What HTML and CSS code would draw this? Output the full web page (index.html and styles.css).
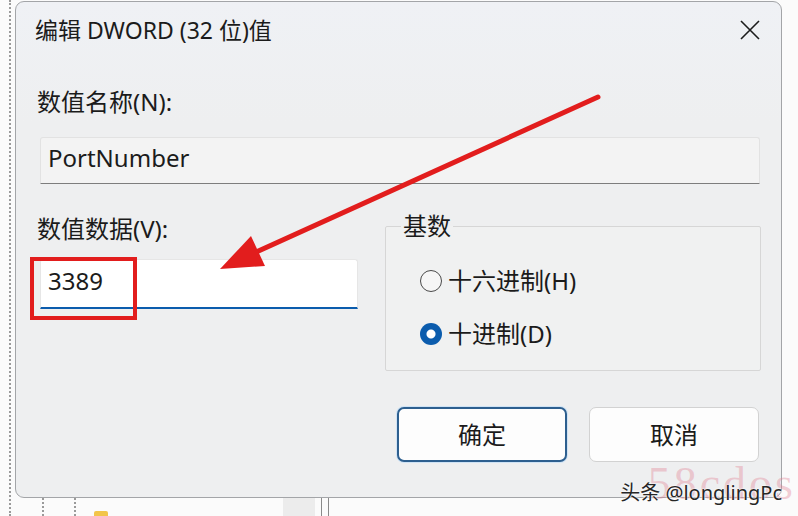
FILE: index.html
```html
<!DOCTYPE html>
<html lang="zh-CN">
<head>
  <meta charset="UTF-8" />
  <title>编辑 DWORD (32 位)值</title>
  <link rel="stylesheet" href="styles.css">
</head>
<body>
  <div class="page">
    <div class="guide"></div>
    <div class="main">
      <section class="dialog">
        <div class="title-bar">
          <h1 class="title">编辑 DWORD (32 位)值</h1>
          <span class="close">
            <svg width="22" height="22" viewBox="0 0 22 22"><path d="M2 2 L20 20 M20 2 L2 20" stroke="#1c1c1c" stroke-width="1.6" fill="none"/></svg>
          </span>
        </div>

        <div class="label name-label">数值名称(N):</div>
        <div class="field name-field">PortNumber</div>

        <div class="data-row">
          <div class="data-col">
            <div class="label data-label">数值数据(V):</div>
            <div class="field value-field">3389</div>
          </div>

          <fieldset class="base-box">
            <legend>基数</legend>
            <div class="radio-row">
              <span class="radio"></span>
              <span>十六进制(H)</span>
            </div>
            <div class="radio-row">
              <span class="radio checked"></span>
              <span>十进制(D)</span>
            </div>
          </fieldset>
        </div>

        <div class="buttons">
          <button class="btn primary">确定</button>
          <button class="btn">取消</button>
        </div>
      </section>

      <div class="below">
        <span class="dots d1"></span>
        <span class="dots d2"></span>
        <span class="folder"></span>
        <span class="grey-block"></span>
        <span class="vline"></span>
        <span class="vline"></span>
      </div>
    </div>
  </div>

  <!-- annotation drawn on top of the screenshot -->
  <svg class="markup" width="798" height="516" viewBox="0 0 798 516">
    <rect x="32" y="259" width="103" height="59" fill="none" stroke="#e21d1d" stroke-width="4"/>
    <line x1="598" y1="97" x2="252" y2="254" stroke="#e21d1d" stroke-width="5" stroke-linecap="round"/>
    <polygon points="220,269 265,266 251,236" fill="#e21d1d"/>
  </svg>

  <div class="watermark">
    <span class="wm-bg">58cdos</span>
    <span class="wm-text">头条 @longlingPc</span>
  </div>
</body>
</html>
```

FILE: styles.css
```css
:root {
  --dialog-bg: #eeeff0;
  --border: #a3a5a8;
  --text: #1b1b1b;
  --accent: #0b5cad;
}

* {
  box-sizing: border-box;
  margin: 0;
  padding: 0;
}

body {
  width: 798px;
  height: 516px;
  overflow: hidden;
  background: #fbfbfb;
  color: var(--text);
  font-family: "Noto Sans", "Noto Sans CJK SC", sans-serif;
  position: relative;
}

.page {
  display: flex;
  height: 516px;
}

.guide {
  width: 11px;
  border-right: 2px dotted #9a9a9a;
}

.main {
  padding-top: 1px;
  margin-left: 4px;
}

.dialog {
  width: 767px;
  height: 497px;
  background: linear-gradient(#eff1f5, var(--dialog-bg) 120px);
  border: 1px solid var(--border);
  border-radius: 9px;
  display: flex;
  flex-direction: column;
}

.title-bar {
  height: 59px;
  display: flex;
  align-items: center;
  justify-content: space-between;
  padding: 0 20px 5px 19px;
}

.title {
  font-size: 23px;
  font-weight: normal;
}

.close {
  display: flex;
  margin-top: 2px;
}

.label {
  font-size: 24px;
  line-height: 30px;
  padding-left: 21px;
}

.name-label {
  margin-top: 26px;
}

.field {
  font-size: 24px;
  padding-left: 7px;
  display: flex;
  align-items: center;
}

.name-field {
  margin: 20px 21px 0 24px;
  height: 47px;
  background: #f3f3f3;
  border: 1px solid #e2e2e2;
  border-bottom: 1px solid #7d7d7d;
  border-radius: 3px 3px 0 0;
  padding-bottom: 7px;
}

.data-row {
  display: flex;
  align-items: flex-start;
}

.data-col {
  width: 358px;
}

.data-label {
  margin-top: 30px;
}

.value-field {
  margin: 15px 0 0 24px;
  width: 318px;
  height: 50px;
  background: #ffffff;
  border: 1px solid #e6e6e6;
  border-bottom: 2px solid var(--accent);
  border-radius: 3px 3px 0 0;
  padding-bottom: 7px;
}

.base-box {
  margin: 30px 0 0 11px;
  width: 376px;
  border: 1px solid #d6d6d6;
  border-radius: 2px;
  background: #f0f1f1;
  padding: 28px 0 21px 34px;
}

.base-box legend {
  font-size: 24px;
  line-height: 24px;
  padding: 0 2px;
  margin-left: -19px;
}

.radio-row {
  display: flex;
  align-items: center;
  gap: 6px;
  height: 30px;
  font-size: 24px;
}

.radio-row span:last-child {
  margin-top: -3px;
}

.radio-row + .radio-row {
  margin-top: 23px;
}

.radio {
  width: 22px;
  height: 22px;
  border-radius: 50%;
  border: 1.5px solid #4a4a4a;
  background: #f6f6f6;
}

.radio.checked {
  border: none;
  background: radial-gradient(circle, #ffffff 0 4px, var(--accent) 5px);
}

.buttons {
  display: flex;
  justify-content: flex-end;
  gap: 22px;
  margin-top: 36px;
  padding-right: 22px;
}

.btn {
  width: 170px;
  height: 55px;
  font-family: inherit;
  font-size: 24px;
  color: var(--text);
  background: #fdfdfd;
  border: 1px solid #d2d2d2;
  border-radius: 7px;
  padding-bottom: 3px;
}

.btn.primary {
  border: 2px solid #2d5f8f;
  box-shadow: 0 0 0 1px #cfe3f5;
}

.below {
  display: flex;
  align-items: flex-start;
  height: 18px;
}

.dots {
  width: 2px;
  height: 18px;
  border-left: 2px dotted #9a9a9a;
}

.d1 {
  margin-left: 27px;
}

.d2 {
  margin-left: 30px;
}

.folder {
  margin: 13px 0 0 18px;
  width: 14px;
  height: 6px;
  background: #f2c54a;
  border-radius: 2px 2px 0 0;
}

.grey-block {
  margin-left: 175px;
  width: 32px;
  height: 18px;
  background: #ececec;
}

.vline {
  margin-left: 6px;
  width: 1px;
  height: 18px;
  background: #8a8a8a;
}

.markup {
  position: absolute;
  left: 0;
  top: 0;
}

.watermark {
  position: absolute;
  right: 16px;
  bottom: 10px;
}

.wm-bg {
  position: absolute;
  right: -14px;
  bottom: -4px;
  font-family: "Liberation Serif", serif;
  font-size: 46px;
  letter-spacing: 3px;
  color: rgba(224, 120, 140, 0.35);
}

.wm-text {
  position: relative;
  font-size: 20px;
  color: #262626;
  text-shadow: 0 0 2px #fff, 0 0 2px #fff;
}
```
